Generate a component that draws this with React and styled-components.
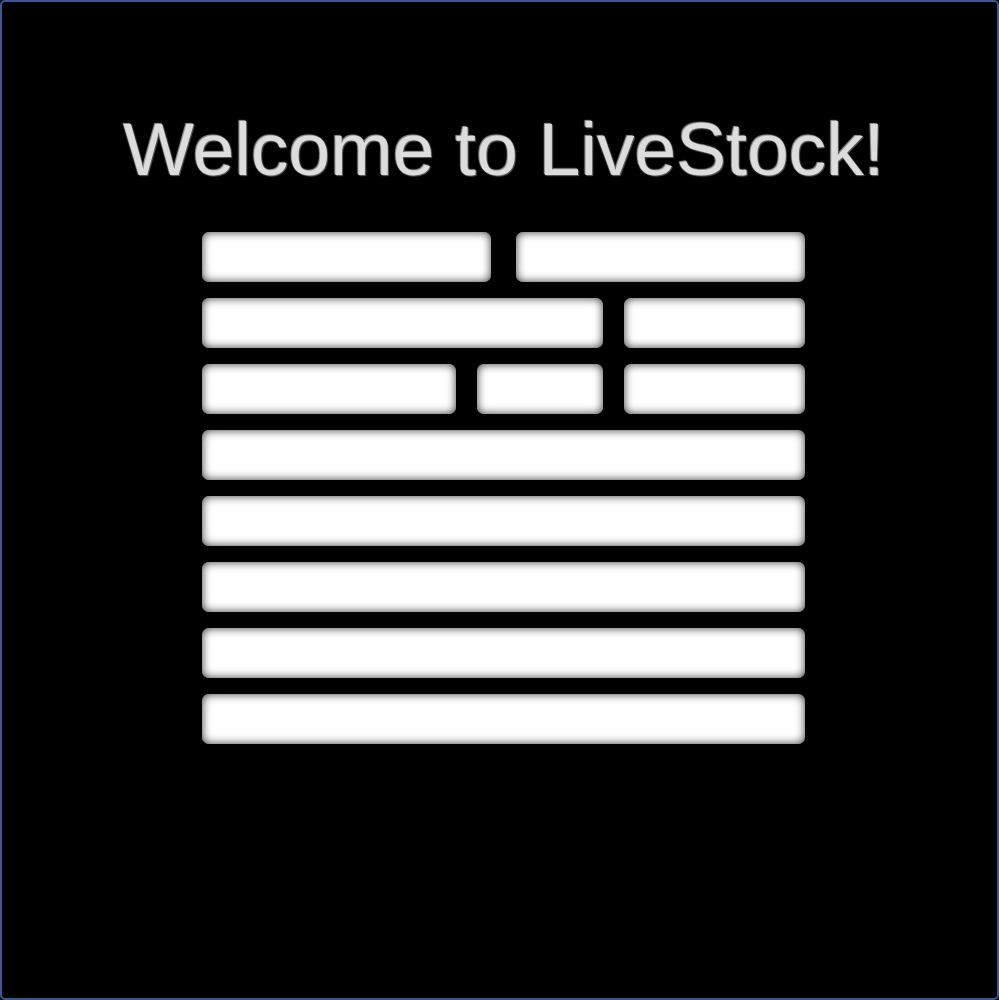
import React from 'react';
import styled, { createGlobalStyle } from 'styled-components';

const GlobalStyle = createGlobalStyle`
  html, body {
    margin: 0;
    padding: 0;
    background: #000000;
  }
  * {
    box-sizing: border-box;
  }
`;

const rows = [
  [290, 290],
  [401, 181],
  [254, 126, 181],
  [603],
  [603],
  [603],
  [603],
  [603]
];

const App = () => {
  return (
    <Frame>
      <GlobalStyle />
      <Title>Welcome to LiveStock!</Title>
      <Form onSubmit={evt => evt.preventDefault()}>
        {rows.map((cols, i) => (
          <Row key={i} cols={cols}>
            {cols.map((w, j) => (
              <Field key={j} type="text" />
            ))}
          </Row>
        ))}
      </Form>
    </Frame>
  );
};

const Frame = styled.div`
  width: 999px;
  height: 1000px;
  background: #000000;
  border: 2px solid #3a5894;
  border-radius: 5px;
  display: flex;
  flex-direction: column;
  align-items: center;
  padding-top: 110px;
`;

const Title = styled.h1`
  margin: 0 0 0 9px;
  font-family: 'Liberation Sans', Arial, sans-serif;
  font-weight: normal;
  font-size: 75px;
  line-height: 75px;
  color: #dcdcdc;
  text-shadow: 1px 1px 1px #5e5e5e, -1px -1px 1px #9a9a9a, 0 0 2px #555555;
`;

const Form = styled.form`
  width: 603px;
  margin: 45px 0 0 8px;
  display: flex;
  flex-direction: column;
  gap: 16px;
`;

const Row = styled.div`
  display: grid;
  grid-template-columns: ${props => props.cols.map(c => c + 'fr').join(' ')};
  column-gap: ${props => (props.cols[0] === 290 ? '25px' : '21px')};
`;

const Field = styled.input`
  display: block;
  width: 100%;
  height: 50px;
  border: none;
  outline: none;
  border-radius: 7px;
  background: #ffffff;
  box-shadow: inset 0 0 10px rgba(0, 0, 0, 0.8);
  font-family: 'Liberation Sans', Arial, sans-serif;
  font-size: 20px;
  padding: 0 12px;
`;

export default App;
